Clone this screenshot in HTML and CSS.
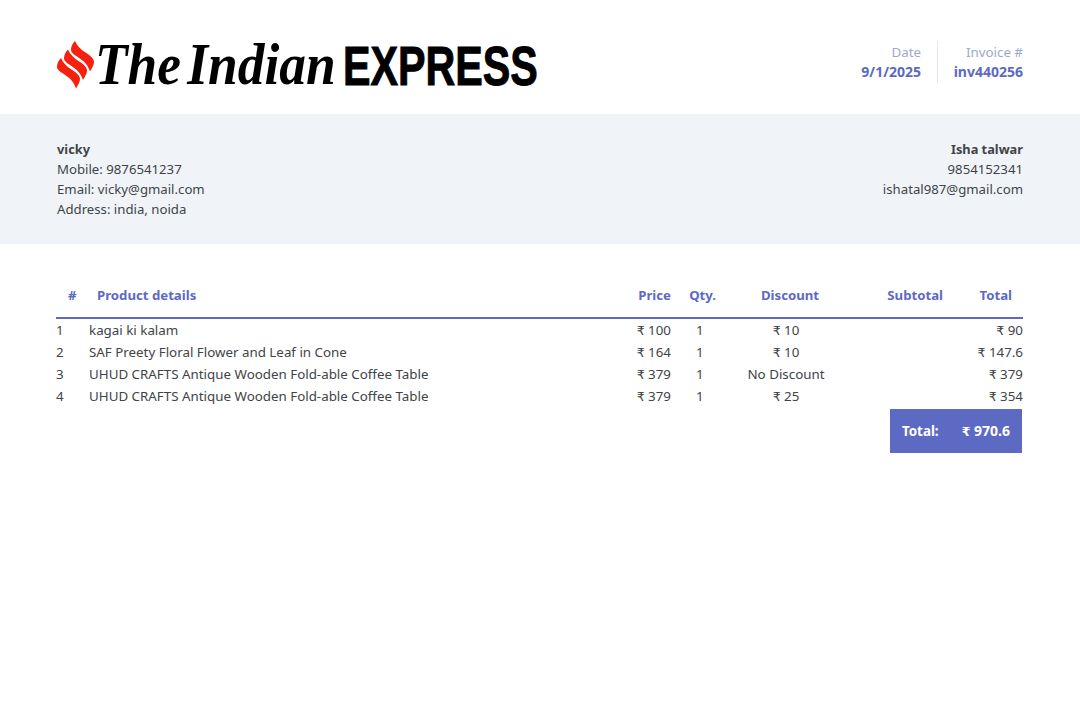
FILE: index.html
```html
<!DOCTYPE html>
<html lang="en">
<head>
<meta charset="utf-8">
<title>Invoice</title>
<link rel="stylesheet" href="styles.css">
</head>
<body>
<header class="top">
  <svg class="logo" width="482" height="50" viewBox="0 0 482 50" xmlns="http://www.w3.org/2000/svg" role="img" aria-label="The Indian Express">
    <defs>
      <path id="flame-band" d="M4 17 C1 20 0 23 0 26 C0 29 4 31 9.5 35 C13 37.5 17 41 19 47.5 C21 44 23 41 23 38 C23 35 20 32 14.5 28.5 C10 25.5 6 22 4 17Z"/>
    </defs>
    <g fill="#f5200d">
      <use href="#flame-band"/>
      <use href="#flame-band" x="7" y="-8.5"/>
      <use href="#flame-band" x="14" y="-17"/>
    </g>
    <text class="logo-serif" transform="translate(38 43) scale(.89 1)">The Indian</text>
    <text class="logo-sans" transform="translate(286 44) scale(.75 1)">EXPRESS</text>
  </svg>
  <div class="meta">
    <div class="meta-item">
      <div class="meta-label">Date</div>
      <div class="meta-value">9/1/2025</div>
    </div>
    <div class="meta-item">
      <div class="meta-label">Invoice #</div>
      <div class="meta-value">inv440256</div>
    </div>
  </div>
</header>

<section class="band">
  <div class="party">
    <div class="party-name">vicky</div>
    <div>Mobile: 9876541237</div>
    <div>Email: vicky@gmail.com</div>
    <div>Address: india, noida</div>
  </div>
  <div class="party party-right">
    <div class="party-name">Isha talwar</div>
    <div>9854152341</div>
    <div>ishatal987@gmail.com</div>
  </div>
</section>

<section class="items">
  <div class="row head">
    <div class="h-num">#</div>
    <div class="h-product">Product details</div>
    <div class="right">Price</div>
    <div class="right">Qty.</div>
    <div class="h-discount">Discount</div>
    <div class="right">Subtotal</div>
    <div class="right h-total">Total</div>
  </div>
  <div class="row">
    <div>1</div><div>kagai ki kalam</div><div class="right"><span class="rs">₹</span> 100</div><div class="qty">1</div><div class="center"><span class="rs">₹</span> 10</div><div></div><div class="right"><span class="rs">₹</span> 90</div>
  </div>
  <div class="row">
    <div>2</div><div>SAF Preety Floral Flower and Leaf in Cone</div><div class="right"><span class="rs">₹</span> 164</div><div class="qty">1</div><div class="center"><span class="rs">₹</span> 10</div><div></div><div class="right"><span class="rs">₹</span> 147.6</div>
  </div>
  <div class="row">
    <div>3</div><div>UHUD CRAFTS Antique Wooden Fold-able Coffee Table</div><div class="right"><span class="rs">₹</span> 379</div><div class="qty">1</div><div class="center">No Discount</div><div></div><div class="right"><span class="rs">₹</span> 379</div>
  </div>
  <div class="row">
    <div>4</div><div>UHUD CRAFTS Antique Wooden Fold-able Coffee Table</div><div class="right"><span class="rs">₹</span> 379</div><div class="qty">1</div><div class="center"><span class="rs">₹</span> 25</div><div></div><div class="right"><span class="rs">₹</span> 354</div>
  </div>
  <div class="grand">
    <div class="grand-box"><span>Total:</span><span class="grand-amount"><span class="rs">₹</span> 970.6</span></div>
  </div>
</section>
</body>
</html>
```
FILE: styles.css
```css
* { box-sizing: border-box; }
html, body { margin: 0; padding: 0; }
body {
  background: #fff;
  color: #404448;
  font-family: "Noto Sans", "Open Sans", sans-serif;
  font-size: 13.35px;
  line-height: 20px;
}
.rs { font-family: "DejaVu Sans", sans-serif; font-size: 12.5px; }
.top {
  height: 114px;
  padding: 41px 57px 0;
  display: flex;
  justify-content: space-between;
  align-items: flex-start;
}
.logo { display: block; overflow: visible; }
.logo-serif {
  font-family: "Liberation Serif", serif;
  font-style: italic;
  font-weight: 700;
  font-size: 60px;
  word-spacing: -8px;
  fill: #000;
}
.logo-sans {
  font-family: "Liberation Sans", sans-serif;
  font-weight: 700;
  font-size: 55px;
  fill: #000;
  stroke: #000;
  stroke-width: 1px;
}
.meta { display: flex; }
.meta-item { padding: 1px 16px 0; text-align: right; height: 42px; }
.meta-item:first-child { border-right: 1px solid #e3e7ea; }
.meta-item:last-child { width: 85px; padding: 1px 0 0; }
.meta-label { color: #9ea9c9; }
.meta-value { color: #5c6ac4; font-weight: 700; font-size: 14px; }
.band {
  height: 130px;
  padding: 25px 57px 0;
  background: #f0f4f9;
  display: flex;
  justify-content: space-between;
  font-size: 13.2px;
}
.party-right { text-align: right; }
.party-name { font-weight: 700; font-size: 12.8px; }
.items { padding: 31px 57px 0 56px; }
.row {
  display: grid;
  grid-template-columns: 33px 1fr 46px 45px 140px 87px 80px;
  height: 22px;
  line-height: 22px;
}
.head {
  height: 44px;
  line-height: 40px;
  color: #5c6ac4;
  font-weight: 700;
  font-size: 13.2px;
  border-bottom: 2px solid #5c6ac4;
}
.right { text-align: right; }
.center { text-align: center; }
.qty { padding-left: 25px; }
.h-num { padding-left: 12px; }
.h-product { padding-left: 8px; }
.h-discount { text-align: center; padding-left: 8px; }
.h-total { padding-right: 11px; }
.grand { display: flex; justify-content: flex-end; padding: 2px 1px 0 0; }
.grand-box {
  width: 132px;
  height: 44px;
  padding: 0 12px;
  display: flex;
  justify-content: space-between;
  align-items: center;
  background: #5c6ac4;
  color: #fff;
  font-weight: 700;
}
.grand-amount { font-size: 14px; }
```
